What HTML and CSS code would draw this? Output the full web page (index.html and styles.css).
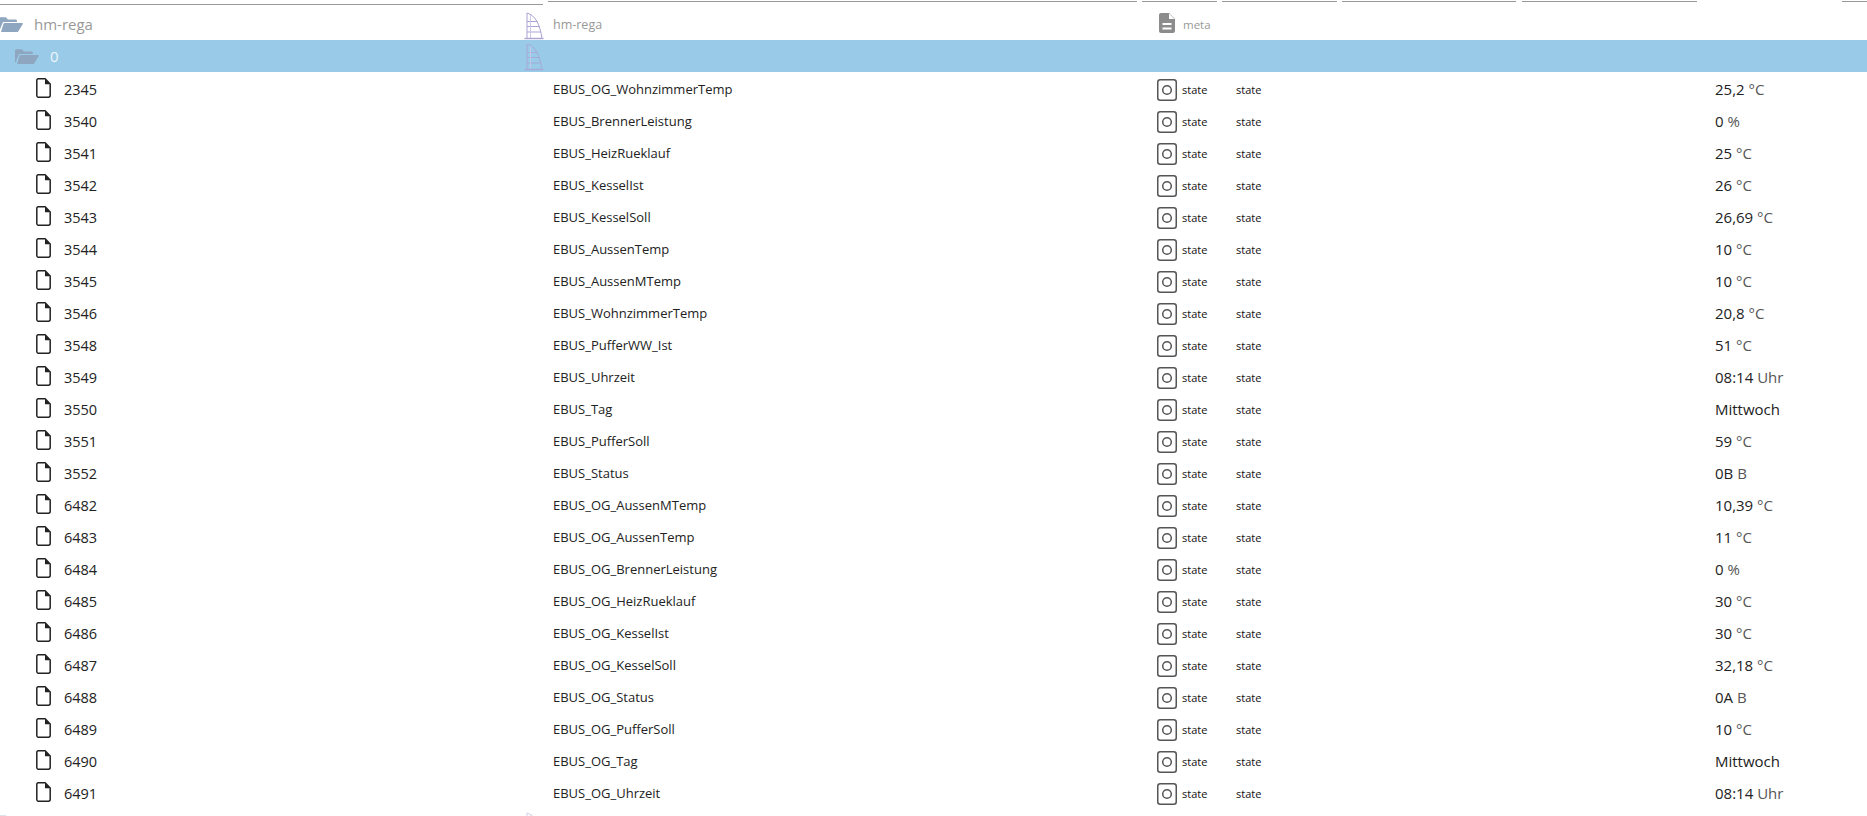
FILE: index.html
```html
<!DOCTYPE html>
<html lang="de">
<head>
<meta charset="utf-8">
<title>hm-rega</title>
<link rel="stylesheet" href="styles.css">
</head>
<body>
<svg class="defs" width="0" height="0" aria-hidden="true">
  <defs>
    <symbol id="folder" viewBox="0 0 25 15">
      <path d="M1 13.5V2C1 .9 1.7.2 2.7.2h5.2l2 2.2h7.4c1 0 1.7.7 1.7 1.7v1H6.4c-1 0-1.7.5-2 1.3L1.3 14z"/>
      <path d="M3 15h15.800c.9 0 1.500-.4 1.900-1.200L24.800 7c.3-.6-.1-1-.7-1H7.200c-.9 0-1.400.3-1.800 1.100z"/>
    </symbol>
    <symbol id="burj" viewBox="0 0 20 28">
      <g fill="none" stroke="#a9a3d6" stroke-width="1">
        <path d="M3 26.500V1c8 2 13 11 15 25.500"/>
        <path d="M3 9.500h10.500M3 14.500h12.500M3 20h13.800"/>
        <path d="M6.500 3V26.500" stroke="#cbc8e8"/>
        <path d="M.500 26.500h19" stroke-width="1.400"/>
      </g>
    </symbol>
    <symbol id="file" viewBox="0 0 15 20">
      <path fill="none" stroke="#222" stroke-width="1.500" stroke-linejoin="round" d="M2.400.8h6.800l5 5.200v11.300c0 1-.7 1.900-1.700 1.900H2.400c-1 0-1.600-.9-1.600-1.900V2.700C.8 1.700 1.400.8 2.400.8z"/>
      <path fill="#222" d="M9 1v5.200h5.200z"/>
    </symbol>
    <symbol id="state" viewBox="0 0 20 22">
      <rect x=".75" y=".75" width="18.500" height="20.500" rx="2.500" fill="none" stroke="#555" stroke-width="1.500"/>
      <circle cx="10" cy="11" r="4.300" fill="none" stroke="#555" stroke-width="1.500"/>
    </symbol>
    <symbol id="meta" viewBox="0 0 16 20">
      <path fill="#8c8c8c" d="M2 0h8l6 6v12c0 1.100-.9 2-2 2H2c-1.100 0-2-.9-2-2V2C0 .9.900 0 2 0z"/>
      <path fill="#fff" d="M10 .5V6h5.500zM3.500 10h9v2h-9zM3.500 14.500h9v2h-9z"/>
    </symbol>
  </defs>
</svg>
<div class="rules">
  <span class="rule r1"></span><span class="rule r2"></span>
  <span class="rule r3"></span><span class="rule r4"></span><span class="rule r5"></span><span class="rule r6"></span>
  <span class="rule r7"></span>
</div>
<div class="row head">
  <div class="c-id root"><svg class="ic-folder root-ic"><use href="#folder"/></svg><span class="nudge">hm-rega</span></div>
  <svg class="ic-burj"><use href="#burj"/></svg>
  <div class="c-name">hm-rega</div>
  <div class="c-type"><svg class="ic-meta"><use href="#meta"/></svg><span class="meta">meta</span></div>
</div>
<div class="row sel">
  <div class="c-id zero"><svg class="ic-folder"><use href="#folder"/></svg><span>0</span></div>
  <svg class="ic-burj dim"><use href="#burj"/></svg>
</div>
<div id="rows"></div>
<div class="row tail">
  <div class="c-id root"><svg class="ic-folder root-ic"><use href="#folder"/></svg></div>
  <svg class="ic-burj"><use href="#burj"/></svg>
</div>
<script src="rows.js"></script>
</body>
</html>
```

FILE: rows.js
```js
var data = [
["2345","EBUS_OG_WohnzimmerTemp","25,2","°C"],["3540","EBUS_BrennerLeistung","0","%"],
["3541","EBUS_HeizRueklauf","25","°C"],["3542","EBUS_KesselIst","26","°C"],
["3543","EBUS_KesselSoll","26,69","°C"],["3544","EBUS_AussenTemp","10","°C"],
["3545","EBUS_AussenMTemp","10","°C"],["3546","EBUS_WohnzimmerTemp","20,8","°C"],
["3548","EBUS_PufferWW_Ist","51","°C"],["3549","EBUS_Uhrzeit","08:14","Uhr"],
["3550","EBUS_Tag","Mittwoch",""],["3551","EBUS_PufferSoll","59","°C"],
["3552","EBUS_Status","0B","B"],["6482","EBUS_OG_AussenMTemp","10,39","°C"],
["6483","EBUS_OG_AussenTemp","11","°C"],["6484","EBUS_OG_BrennerLeistung","0","%"],
["6485","EBUS_OG_HeizRueklauf","30","°C"],["6486","EBUS_OG_KesselIst","30","°C"],
["6487","EBUS_OG_KesselSoll","32,18","°C"],["6488","EBUS_OG_Status","0A","B"],
["6489","EBUS_OG_PufferSoll","10","°C"],["6490","EBUS_OG_Tag","Mittwoch",""],
["6491","EBUS_OG_Uhrzeit","08:14","Uhr"]];
document.getElementById("rows").innerHTML = data.map(function (d) {
  return '<div class="row item">' +
    '<div class="c-id leaf"><svg class="ic-file"><use href="#file"/></svg><span class="nudge">' + d[0] + '</span></div>' +
    '<div class="c-name nudge">' + d[1] + '</div>' +
    '<div class="c-type"><svg class="ic-state"><use href="#state"/></svg><span class="st nudge">state</span></div>' +
    '<div class="c-role nudge">state</div>' +
    '<div class="c-val nudge">' + d[2] + ' <span class="unit">' + d[3] + '</span></div>' +
    '</div>';
}).join("");
```

FILE: styles.css
```css
* { box-sizing: border-box; }
html, body { margin: 0; height: 816px; overflow: hidden; background: #fff; }
body { font-family: "Open Sans", "Liberation Sans", sans-serif; color: #222; width: 1867px; }
.defs { position: absolute; }
.rules { display: flex; height: 5px; align-items: flex-start; }
.rule { height: 1.500px; background: #999; display: block; }
.r1 { width: 543px; margin-top: 3.500px; }
.r2 { width: 589px; margin-left: 5px; margin-top: .500px; }
.r3 { width: 75px; margin-left: 5px; margin-top: .500px; }
.r4 { width: 115px; margin-left: 5px; margin-top: .500px; }
.r5 { width: 174px; margin-left: 5px; margin-top: .500px; }
.r6 { width: 175px; margin-left: 6px; margin-top: .500px; }
.r7 { width: 25px; margin-left: 145px; margin-top: .500px; }
.row { display: flex; align-items: center; height: 32px; position: relative; }
.head { height: 35px; }
.head .c-name, .head .meta, .head .nudge { padding-top: 3px; }
.nudge { padding-top: 2px; }
.sel { background: #99cbe8; }
.c-id { width: 553px; display: flex; align-items: center; flex: none; }
.root { color: #999; font-size: 15px; padding-left: 34px; }
.root-ic { position: absolute; left: -2px; top: 12px; }
.zero { color: #eef6fb; font-size: 15px; padding-left: 14px; gap: 11px; }
.leaf { padding-left: 36px; gap: 13px; font-size: 14.500px; }
.ic-folder { width: 25px; height: 15px; fill: #8fa6c0; flex: none; }
.ic-file { width: 15px; height: 20px; flex: none; }
.ic-burj { position: absolute; left: 524px; top: 7px; width: 20px; height: 28px; }
.dim { top: 3px; opacity: .8; }
.c-name { width: 604px; flex: none; font-size: 13px; }
.head .c-name { color: #999; font-size: 12.500px; }
.c-type { width: 79px; display: flex; align-items: center; gap: 5px; flex: none; }
.ic-state { width: 20px; height: 22px; flex: none; margin-top: 4px; }
.st, .c-role { font-size: 11px; color: #111; }
.ic-meta { width: 16px; height: 20px; margin-left: 2px; flex: none; }
.meta { font-size: 11.500px; color: #999; margin-left: 3px; }
.c-role { width: 479px; flex: none; }
.c-val { font-size: 15px; flex: none; }
.unit { color: #555; }
.tail .ic-burj { top: 4px; opacity: .5; }
.tail .root-ic { top: 7px; opacity: .4; }
```
